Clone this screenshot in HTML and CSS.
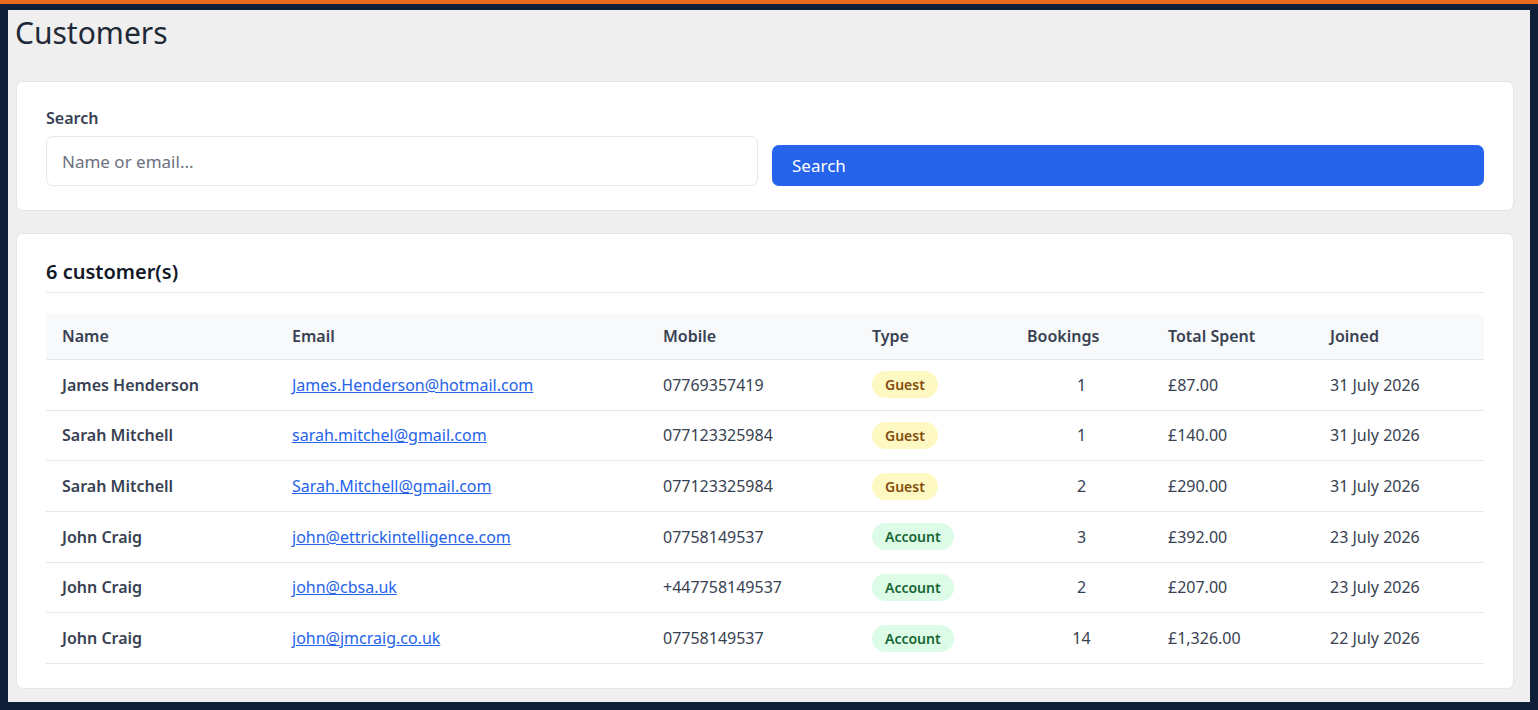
FILE: index.html
```html
<!DOCTYPE html>
<html lang="en">
<head>
    <meta charset="UTF-8">
    <meta name="viewport" content="width=device-width, initial-scale=1.0">
    <title>Customers</title>
    <link rel="stylesheet" href="styles.css">
</head>
<body>
    <div class="frame">
        <div class="page">
            <h1 class="page-title">Customers</h1>

            <div class="card search-card">
                <form class="search-form">
                    <div class="field">
                        <label for="q">Search</label>
                        <input type="text" id="q" placeholder="Name or email...">
                    </div>
                    <button type="button" class="btn-primary">Search</button>
                </form>
            </div>

            <div class="card">
                <h2 class="card-title">6 customer(s)</h2>
                <table class="customers">
                    <colgroup>
                        <col class="c-name">
                        <col class="c-email">
                        <col class="c-mobile">
                        <col class="c-type">
                        <col class="c-bookings">
                        <col class="c-spent">
                        <col class="c-joined">
                    </colgroup>
                    <thead>
                        <tr>
                            <th>Name</th>
                            <th>Email</th>
                            <th>Mobile</th>
                            <th>Type</th>
                            <th>Bookings</th>
                            <th>Total Spent</th>
                            <th>Joined</th>
                        </tr>
                    </thead>
                    <tbody>
                        <tr>
                            <td class="name">James Henderson</td>
                            <td><a href="#">James.Henderson@hotmail.com</a></td>
                            <td>07769357419</td>
                            <td><span class="badge guest">Guest</span></td>
                            <td class="num">1</td>
                            <td>£87.00</td>
                            <td>31 July 2026</td>
                        </tr>
                        <tr>
                            <td class="name">Sarah Mitchell</td>
                            <td><a href="#">sarah.mitchel@gmail.com</a></td>
                            <td>077123325984</td>
                            <td><span class="badge guest">Guest</span></td>
                            <td class="num">1</td>
                            <td>£140.00</td>
                            <td>31 July 2026</td>
                        </tr>
                        <tr>
                            <td class="name">Sarah Mitchell</td>
                            <td><a href="#">Sarah.Mitchell@gmail.com</a></td>
                            <td>077123325984</td>
                            <td><span class="badge guest">Guest</span></td>
                            <td class="num">2</td>
                            <td>£290.00</td>
                            <td>31 July 2026</td>
                        </tr>
                        <tr>
                            <td class="name">John Craig</td>
                            <td><a href="#">john@ettrickintelligence.com</a></td>
                            <td>07758149537</td>
                            <td><span class="badge account">Account</span></td>
                            <td class="num">3</td>
                            <td>£392.00</td>
                            <td>23 July 2026</td>
                        </tr>
                        <tr>
                            <td class="name">John Craig</td>
                            <td><a href="#">john@cbsa.uk</a></td>
                            <td>+447758149537</td>
                            <td><span class="badge account">Account</span></td>
                            <td class="num">2</td>
                            <td>£207.00</td>
                            <td>23 July 2026</td>
                        </tr>
                        <tr>
                            <td class="name">John Craig</td>
                            <td><a href="#">john@jmcraig.co.uk</a></td>
                            <td>07758149537</td>
                            <td><span class="badge account">Account</span></td>
                            <td class="num">14</td>
                            <td>£1,326.00</td>
                            <td>22 July 2026</td>
                        </tr>
                    </tbody>
                </table>
            </div>
        </div>
    </div>
</body>
</html>
```

FILE: styles.css
```css
html, body {
    margin: 0;
    padding: 0;
    height: 100%;
}

body {
    font-family: 'Noto Sans', 'Open Sans', sans-serif;
    background-color: #101f38;
    color: #374151;
    overflow: hidden;
}

.frame {
    border-top: 4px solid #ea6a1f;
    padding: 6px 8px 8px 8px;
}

.page {
    background-color: #efefef;
    height: 692px;
    padding: 0 16px 0 8px;
    box-sizing: border-box;
    overflow: hidden;
}

.page-title {
    font-size: 30px;
    font-weight: 400;
    line-height: 36px;
    color: #1f2937;
    margin: 5px 0 30px -1px;
}

.card {
    background-color: #fff;
    border: 1px solid #e5e5e5;
    border-radius: 7px;
    padding: 24px 29px;
}

.search-card {
    margin-bottom: 22px;
}

.search-form {
    display: grid;
    grid-template-columns: 1fr 1fr;
    column-gap: 14px;
    align-items: end;
    margin: 0;
}

.field label {
    display: block;
    font-size: 16px;
    font-weight: 600;
    line-height: 24px;
    margin-bottom: 6px;
    color: #374151;
}

.field input {
    display: block;
    width: 100%;
    box-sizing: border-box;
    height: 50px;
    padding: 0 15px;
    font-family: inherit;
    font-size: 17px;
    color: #374151;
    border: 1px solid #e5e7eb;
    border-radius: 7px;
    outline: none;
}

.field input::placeholder {
    color: #6b7280;
}

.btn-primary {
    height: 41px;
    background-color: #2563eb;
    color: #fff;
    border: none;
    border-radius: 7px;
    padding: 0 20px;
    font-family: inherit;
    font-size: 17px;
    text-align: left;
    cursor: pointer;
}

.card-title {
    font-size: 20px;
    font-weight: 600;
    line-height: 28px;
    color: #111827;
    margin: 0 0 21px 0;
    padding-bottom: 6px;
    border-bottom: 1px solid #e5e7eb;
}

.customers {
    width: 100%;
    border-collapse: collapse;
    table-layout: fixed;
    font-size: 16px;
}

.c-name { width: 230px; }
.c-email { width: 371px; }
.c-mobile { width: 209px; }
.c-type { width: 155px; }
.c-bookings { width: 141px; }
.c-spent { width: 162px; }
.c-joined { width: 170px; }

.customers th {
    background-color: #f8f9fa;
    text-align: left;
    font-weight: 600;
    line-height: 21px;
    padding: 12px 16px;
    border-bottom: 1px solid #e5e7eb;
    color: #374151;
}

.customers td {
    height: 49.67px;
    padding: 0 16px;
    line-height: 24px;
    border-bottom: 1px solid #e5e7eb;
    vertical-align: middle;
    white-space: nowrap;
}

.customers td.name {
    font-weight: 600;
}

.customers td.num {
    text-align: center;
}

.customers a {
    color: #2563eb;
    text-decoration: underline;
}

.badge {
    display: inline-block;
    font-size: 14px;
    font-weight: 600;
    line-height: 19px;
    padding: 4px 13px;
    border-radius: 999px;
    vertical-align: middle;
}

.guest {
    background-color: #fef9c3;
    color: #854d0e;
}

.account {
    background-color: #dcfce7;
    color: #166534;
}
```
